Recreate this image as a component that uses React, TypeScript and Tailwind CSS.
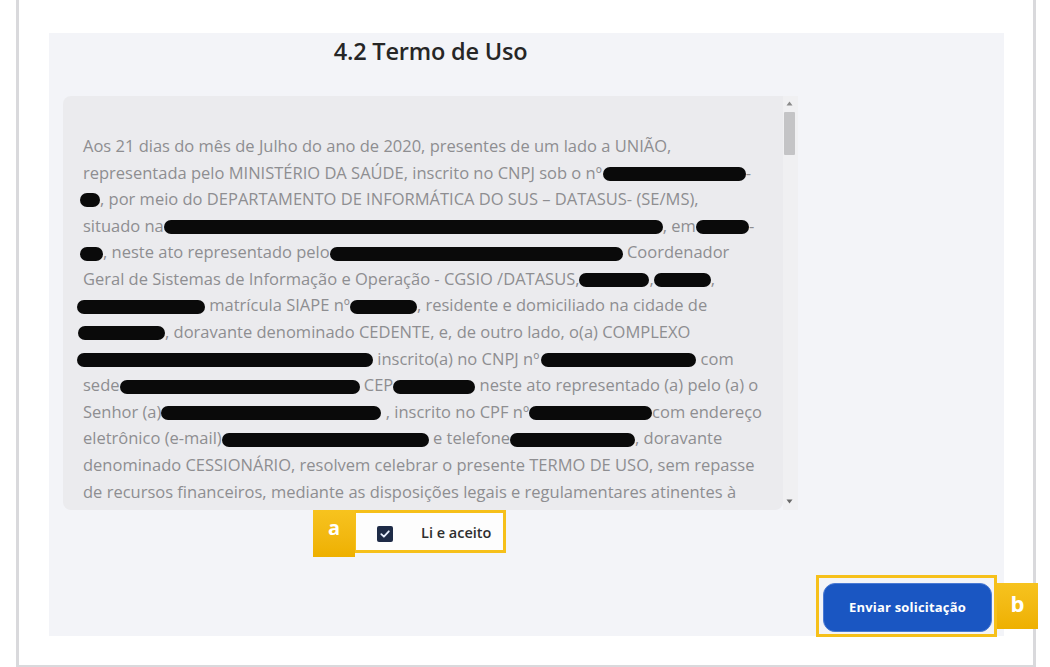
import React from "react";

type Seg = { t?: string; r?: string };

const lines: Seg[][] = [
  [{ t: "Aos 21 dias do mês de Julho do ano de 2020, presentes de um lado a UNIÃO," }],
  [{ t: "representada pelo MINISTÉRIO DA SAÚDE, inscrito no CNPJ sob o nº" }, { r: "w-[143px] ml-[1px]" }, { t: "-" }],
  [{ r: "w-[20px] ml-[-3px]" }, { t: ", por meio do DEPARTAMENTO DE INFORMÁTICA DO SUS – DATASUS- (SE/MS)," }],
  [{ t: "situado na" }, { r: "w-[499px]" }, { t: ", em" }, { r: "w-[53px]" }, { t: "-" }],
  [{ r: "w-[23px] ml-[-3px]" }, { t: ", neste ato representado pelo" }, { r: "w-[293px]" }, { t: "\u00a0Coordenador" }],
  [{ t: "Geral de Sistemas de Informação e Operação - CGSIO /DATASUS," }, { r: "w-[70px]" }, { t: "," }, { r: "w-[57px]" }, { t: "," }],
  [{ r: "w-[128px] ml-[-6px]" }, { t: "\u00a0matrícula SIAPE nº" }, { r: "w-[67px]" }, { t: ", residente e domiciliado na cidade de" }],
  [{ r: "w-[87px] ml-[-5px]" }, { t: ", doravante denominado CEDENTE, e, de outro lado, o(a) COMPLEXO" }],
  [{ r: "w-[296px] ml-[-6px]" }, { t: "\u00a0inscrito(a) no CNPJ nº" }, { r: "w-[155px] ml-[2px]" }, { t: "\u00a0com" }],
  [{ t: "sede" }, { r: "w-[240px]" }, { t: "\u00a0CEP" }, { r: "w-[82px]" }, { t: "\u00a0neste ato representado (a) pelo (a) o" }],
  [{ t: "Senhor (a)" }, { r: "w-[220px]" }, { t: "\u00a0, inscrito no CPF nº" }, { r: "w-[123px]" }, { t: "com endereço" }],
  [{ t: "eletrônico (e-mail)" }, { r: "w-[207px]" }, { t: "\u00a0e telefone" }, { r: "w-[125px]" }, { t: ", doravante" }],
  [{ t: "denominado CESSIONÁRIO, resolvem celebrar o presente TERMO DE USO, sem repasse" }],
  [{ t: "de recursos financeiros, mediante as disposições legais e regulamentares atinentes à" }],
];

function Line({ segs }: { segs: Seg[] }) {
  return (
    <div className="h-[26.6px] flex items-center whitespace-nowrap">
      {segs.map((s, i) =>
        s.r ? (
          <span key={i} className={"inline-block h-[14px] rounded-full bg-[#0a0a0a] mt-[2px] " + s.r} />
        ) : (
          <span key={i}>{s.t}</span>
        )
      )}
    </div>
  );
}

export default function App() {
  return (
    <div className="w-[1050px] h-[667px] bg-white overflow-hidden" style={{ fontFamily: '"Open Sans", "Noto Sans", sans-serif' }}>
      <div className="ml-[16px] w-[1020px] h-[667px] border-l-[3px] border-r-[3px] border-b-[2px] border-[#d9d9dc] bg-white pt-[33px] pl-[30px]">
        <div className="relative w-[955px] h-[603px] bg-[#f3f4f8] flex flex-col">
          <div className="ml-[14px] w-[735px] flex flex-col items-center">
            <div className="mt-[3px] h-[30px] leading-[30px] text-[23.5px] font-semibold text-[#262626] tracking-[-0.2px]">4.2 Termo de Uso</div>
            <div className="mt-[30px] w-[735px] h-[414px] flex">
              <div className="w-[720px] h-full bg-[#ebebee] rounded-l-[8px] rounded-br-[8px] pl-[20px] pt-[37px] overflow-hidden text-[16.5px] text-[#8e8e91]">
                {lines.map((l, i) => (
                  <Line key={i} segs={l} />
                ))}
              </div>
              <div className="w-[15px] h-full bg-[#f0f0f2] flex flex-col items-center pt-[5px] pb-[6px]">
                <svg width="7" height="5" viewBox="0 0 7 5" className="ml-[-2px]">
                  <path d="M3.5 0.5 L6.5 4.5 L0.5 4.5 Z" fill="#8a8a8a" />
                </svg>
                <div className="mt-[6px] ml-[-2px] w-[11px] h-[43px] bg-[#c4c4c6] rounded-[1px]" />
                <div className="flex-1" />
                <svg width="7" height="5" viewBox="0 0 7 5" className="ml-[-2px]">
                  <path d="M0.5 0.5 L6.5 0.5 L3.5 4.5 Z" fill="#6a6a6a" />
                </svg>
              </div>
            </div>
            <div className="relative w-[153px] h-[43px] border-[3px] border-[#f6c01a] bg-[#fdfdfd] flex items-center pl-[21px] ml-[-2px]">
              <div className="absolute left-[-43px] top-[-3px] w-[42px] h-[47px] bg-gradient-to-b from-[#f7c31e] to-[#eeb000] flex items-start justify-center pt-[6px]">
                <span className="text-white text-[20px] font-bold leading-[24px]">a</span>
              </div>
              <div className="w-[16px] h-[16px] rounded-[2px] bg-[#1e2b47] flex items-center justify-center mt-[5px]">
                <svg width="12" height="12" viewBox="0 0 12 12">
                  <path d="M2.3 6.2 L4.9 8.7 L9.8 3.3" stroke="#e8f0ff" strokeWidth="1.8" fill="none" strokeLinecap="round" strokeLinejoin="round" />
                </svg>
              </div>
              <span className="ml-[28px] text-[14.5px] font-semibold text-[#2e2e2e] mt-[2px]">Li e aceito</span>
            </div>
          </div>
          <div className="mt-auto flex justify-end pr-[7px] mb-[-1px]">
            <div className="relative border-[3px] border-[#f6c01a] bg-[#f3f4f8] pl-[4px] pr-[2px] pt-[5px] pb-[2px]">
              <button className="w-[169px] h-[49px] rounded-[12px] bg-[#1a56c2] border border-[#4a7ad4] text-white text-[13px] font-bold tracking-[0.2px]">
                Enviar solicitação
              </button>
              <div className="absolute right-[-44px] top-[5px] w-[41px] h-[46px] bg-gradient-to-b from-[#f7c31e] to-[#eeb000] flex items-center justify-center">
                <span className="text-white text-[22px] font-bold leading-[24px] mt-[-6px]">b</span>
              </div>
            </div>
          </div>
        </div>
      </div>
    </div>
  );
}
